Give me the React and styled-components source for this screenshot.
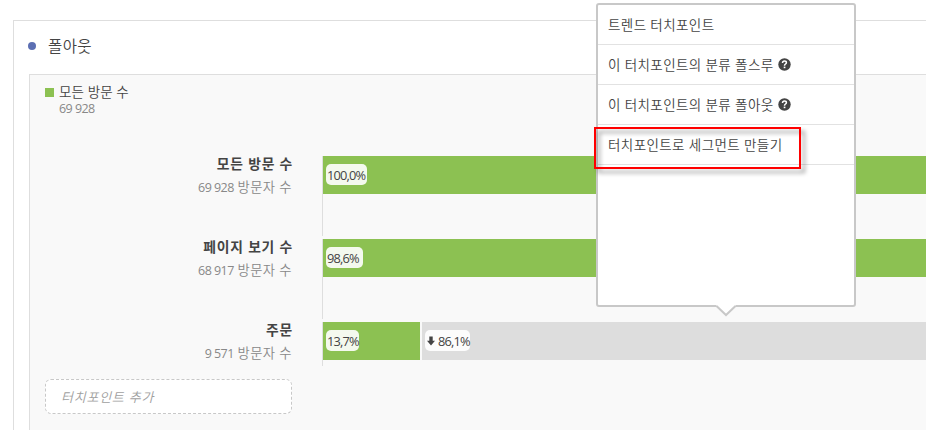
import React from "react";
import styled, { createGlobalStyle } from "styled-components";

const GlobalStyle = createGlobalStyle`
  *, *::before, *::after { box-sizing: border-box; }
  body { margin: 0; background: #fff; overflow: hidden; }
`;

const Page = styled.div`
  position: relative;
  width: 926px;
  height: 430px;
  padding: 20px 0 0 13px;
  overflow: hidden;
  color: #444;
  font-family: "Open Sans", "Noto Sans CJK KR", sans-serif;
  font-size: 13px;
  white-space: nowrap;
`;

const Card = styled.section`
  height: 410px;
  padding-left: 15px;
  border: solid #dedede;
  border-width: 1px 0 0 1px;
`;

const CardHeader = styled.header`
  display: flex;
  align-items: center;
  gap: 12px;
  height: 53px;
  padding-bottom: 3px;
`;

const Dot = styled.span`
  width: 8px;
  height: 8px;
  margin-left: -1px;
  border-radius: 50%;
  background: #5c6fb3;
`;

const Title = styled.h1`
  margin: 0;
  font-size: 15.5px;
  font-weight: 350;
  line-height: 20px;
  letter-spacing: 0.4px;
`;

const Panel = styled.div`
  height: 356px;
  padding: 7px 0 0 15px;
  border: solid #dedede;
  border-width: 1px 0 0 1px;
  background: #f9f9f9;
`;

const Legend = styled.div`
  display: flex;
  gap: 5px;
  height: 74px;
`;

const Swatch = styled.span`
  width: 9px;
  height: 9px;
  margin-top: 6px;
  background: #8cc152;
`;

const LegendName = styled.div`
  font-size: 13.5px;
  font-weight: 350;
  line-height: 20px;
  letter-spacing: 0.1px;
`;

const Count = styled.span`
  color: #888;
  font-size: 12.5px;
  font-weight: 500;
  letter-spacing: -0.55px;
`;

const LegendCount = styled(Count)`
  display: block;
  line-height: 14px;
`;

const Rows = styled.div`
  display: flex;
  flex-direction: column;
  gap: 3px;
`;

const Row = styled.div`
  display: flex;
  height: ${(p) => (p.$last ? 44 : 80)}px;
`;

const Labels = styled.div`
  width: 247px;
  margin-right: 30px;
  text-align: right;
`;

const Name = styled.div`
  height: 20px;
  margin: -2px -1px 0 0;
  font-size: 13.8px;
  font-weight: 700;
  line-height: 20px;
  letter-spacing: 0.8px;
`;

const Visitors = styled.div`
  height: 20px;
  margin-top: 3px;
  color: #888;
  font-size: 13.3px;
  font-weight: 350;
  line-height: 20px;
  letter-spacing: 0.4px;
`;

const Track = styled.div`
  display: flex;
  flex: 1;
  gap: 2px;
  border-left: 1px solid #dedede;
`;

const Bar = styled.div`
  display: flex;
  align-items: center;
  flex: ${(p) => (p.$width ? `0 0 ${p.$width}px` : 1)};
  height: 38px;
  padding-left: 3px;
  background: ${(p) => (p.$lost ? "#dddddd" : "#8cc152")};
`;

const Badge = styled.span`
  display: flex;
  align-items: center;
  gap: 3px;
  width: ${(p) => p.$width}px;
  height: 21px;
  margin-top: -1px;
  padding-left: ${(p) => (p.$arrow ? 2 : 1)}px;
  border-radius: 5px;
  background: rgba(255, 255, 255, 0.9);
  font-size: 12.8px;
  font-weight: 500;
  letter-spacing: -0.8px;
`;

const AddBox = styled.div`
  width: 247px;
  height: 35px;
  margin-top: 13px;
  padding-left: 15px;
  border: 1px dashed #c8c8c8;
  border-radius: 6px;
  background: #fff;
  color: #a0a0a0;
  font-size: 13px;
  font-style: italic;
  font-weight: 350;
  line-height: 34px;
  letter-spacing: 0.75px;
`;

const Popover = styled.div`
  position: absolute;
  left: 596px;
  top: 3px;
  width: 260px;
  height: 304px;
  border: 2px solid #c8c8c8;
  border-radius: 3px;
  background: #fff;
`;

const MenuItem = styled.div`
  display: flex;
  align-items: center;
  gap: 4px;
  height: 40px;
  padding: 0 0 2px 10px;
  border-bottom: 1px solid #e2e2e2;
  font-size: 13.5px;
  font-weight: 350;
  letter-spacing: 0.4px;
`;

const Pointer = styled.svg`
  position: absolute;
  left: 117px;
  top: 300px;
`;

const Highlight = styled.div`
  position: absolute;
  left: 594px;
  top: 127px;
  width: 207px;
  height: 42px;
  border: 2px solid #f00;
  filter: drop-shadow(4px 4px 2px rgba(0, 0, 0, 0.4));
`;

const HelpMark = styled.svg`
  margin-top: 2px;
`;

const HelpIcon = () => (
  <HelpMark width="13" height="13" viewBox="0 0 13 13">
    <circle cx="6.5" cy="6.5" r="6.2" fill="#444" />
    <path d="M4.5 5C4.6 3.7 5.4 3.1 6.5 3.1C7.8 3.1 8.4 3.8 8.4 4.7C8.4 6 6.5 6.1 6.5 7.7" fill="none" stroke="#fff" strokeWidth="1.5" />
    <rect x="5.7" y="8.6" width="1.7" height="1.6" fill="#fff" />
  </HelpMark>
);

const DownArrow = () => (
  <svg width="8" height="10" viewBox="0 0 8 10">
    <path d="M2.3 0.5H5.7V4.8H8L4 9.5L0 4.8H2.3Z" fill="#444" />
  </svg>
);

const steps = [
  { name: "모든 방문 수", count: "69 928", rate: "100,0%", badge: 41 },
  { name: "페이지 보기 수", count: "68 917", rate: "98,6%", badge: 37 },
  { name: "주문", count: "9 571", rate: "13,7%", badge: 33, width: 97, lost: "86,1%" },
];

const actions = [
  { label: "트렌드 터치포인트" },
  { label: "이 터치포인트의 분류 폴스루", help: true },
  { label: "이 터치포인트의 분류 폴아웃", help: true },
  { label: "터치포인트로 세그먼트 만들기" },
];

export default function App() {
  return (
    <Page>
      <GlobalStyle />
      <Card>
        <CardHeader>
          <Dot />
          <Title>폴아웃</Title>
        </CardHeader>
        <Panel>
          <Legend>
            <Swatch />
            <div>
              <LegendName>모든 방문 수</LegendName>
              <LegendCount>69 928</LegendCount>
            </div>
          </Legend>
          <Rows>
            {steps.map((s) => (
              <Row key={s.name} $last={Boolean(s.lost)}>
                <Labels>
                  <Name>{s.name}</Name>
                  <Visitors><Count>{s.count}</Count> 방문자 수</Visitors>
                </Labels>
                <Track>
                  <Bar $width={s.width}><Badge $width={s.badge}>{s.rate}</Badge></Bar>
                  {s.lost && <Bar $lost><Badge $arrow $width={45}><DownArrow />{s.lost}</Badge></Bar>}
                </Track>
              </Row>
            ))}
          </Rows>
          <AddBox>터치포인트 추가</AddBox>
        </Panel>
      </Card>
      <Popover>
        {actions.map((a) => (
          <MenuItem key={a.label}>
            <span>{a.label}</span>
            {a.help && <HelpIcon />}
          </MenuItem>
        ))}
        <Pointer width="22" height="12" viewBox="0 0 22 12">
          <path d="M1 0H21L11 10Z" fill="#fff" />
          <path d="M1.5 1L11 10L20.5 1" fill="none" stroke="#c8c8c8" strokeWidth="2" />
        </Pointer>
      </Popover>
      <Highlight />
    </Page>
  );
}
